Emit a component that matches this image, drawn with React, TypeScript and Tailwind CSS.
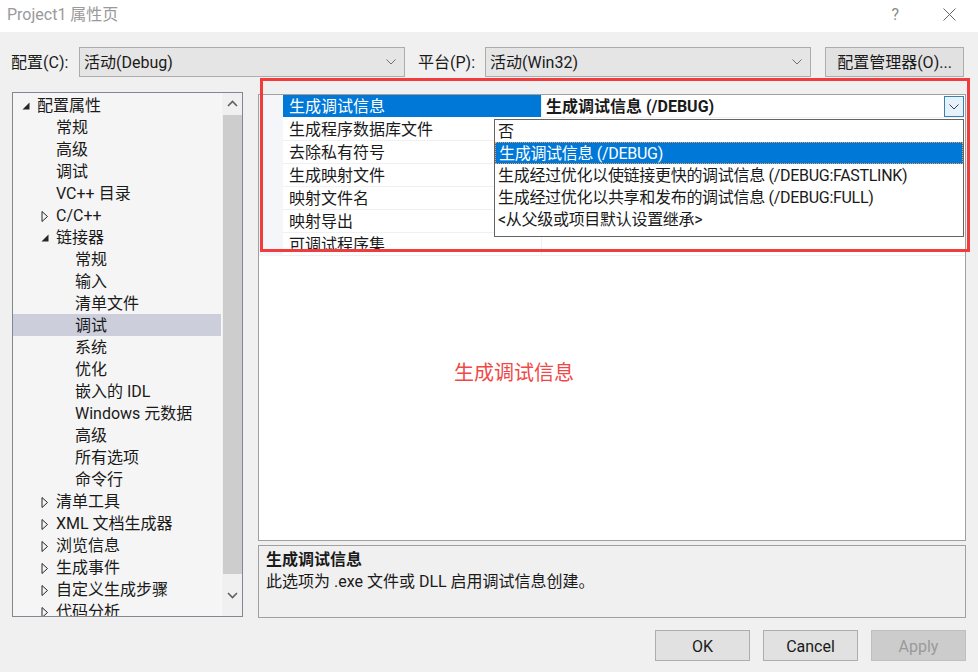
import React from "react";

type Node = { lvl: number; exp?: "down" | "right"; text: string; sel?: boolean };

const tree: Node[] = [
  { lvl: 0, exp: "down", text: "配置属性" },
  { lvl: 1, text: "常规" },
  { lvl: 1, text: "高级" },
  { lvl: 1, text: "调试" },
  { lvl: 1, text: "VC++ 目录" },
  { lvl: 1, exp: "right", text: "C/C++" },
  { lvl: 1, exp: "down", text: "链接器" },
  { lvl: 2, text: "常规" },
  { lvl: 2, text: "输入" },
  { lvl: 2, text: "清单文件" },
  { lvl: 2, text: "调试", sel: true },
  { lvl: 2, text: "系统" },
  { lvl: 2, text: "优化" },
  { lvl: 2, text: "嵌入的 IDL" },
  { lvl: 2, text: "Windows 元数据" },
  { lvl: 2, text: "高级" },
  { lvl: 2, text: "所有选项" },
  { lvl: 2, text: "命令行" },
  { lvl: 1, exp: "right", text: "清单工具" },
  { lvl: 1, exp: "right", text: "XML 文档生成器" },
  { lvl: 1, exp: "right", text: "浏览信息" },
  { lvl: 1, exp: "right", text: "生成事件" },
  { lvl: 1, exp: "right", text: "自定义生成步骤" },
  { lvl: 1, exp: "right", text: "代码分析" },
];

const props = [
  "生成调试信息",
  "生成程序数据库文件",
  "去除私有符号",
  "生成映射文件",
  "映射文件名",
  "映射导出",
  "可调试程序集",
];

const options = [
  "否",
  "生成调试信息 (/DEBUG)",
  "生成经过优化以使链接更快的调试信息 (/DEBUG:FASTLINK)",
  "生成经过优化以共享和发布的调试信息 (/DEBUG:FULL)",
  "<从父级或项目默认设置继承>",
];

function ChevronDown({ color = "#606060" }: { color?: string }) {
  return (
    <svg width="10" height="6" viewBox="0 0 10 6">
      <polyline points="0.5,0.5 5,5 9.5,0.5" fill="none" stroke={color} strokeWidth="1" />
    </svg>
  );
}

function Indent({ pl }: { pl: number }) {
  if (pl === 0) return <div className="w-[9px] shrink-0" />;
  if (pl === 1) return <div className="w-[28px] shrink-0" />;
  return <div className="w-[47px] shrink-0" />;
}

function Expander({ exp }: { exp?: "down" | "right" }) {
  if (exp === "down")
    return (
      <div className="w-[15px] shrink-0 flex items-center">
        <svg width="8" height="8" viewBox="0 0 8 8">
          <polygon points="7.5,0.5 7.5,7.5 0.5,7.5" fill="#262626" />
        </svg>
      </div>
    );
  if (exp === "right")
    return (
      <div className="w-[15px] shrink-0 flex items-center">
        <svg width="8" height="11" viewBox="0 0 8 11">
          <polygon points="1,0.5 6.5,5.5 1,10.5" fill="none" stroke="#262626" strokeWidth="1" />
        </svg>
      </div>
    );
  return <div className="w-[15px] shrink-0" />;
}

function Select({ value }: { value: string }) {
  return (
    <div className="w-[326px] h-[30px] bg-[#e5e5e5] border border-[#acacac] flex items-center justify-between pl-[4px] pr-[8px]">
      <span className="pt-[2px]">{value}</span>
      <ChevronDown color="#707070" />
    </div>
  );
}

export default function App() {
  return (
    <div className="relative w-[978px] h-[672px] overflow-hidden bg-[#f0f0f0] text-[16px] text-[#1a1a1a] font-['Roboto','Noto_Sans_CJK_SC',sans-serif] leading-[22px]">
      {/* Title bar */}
      <div className="h-[32px] bg-white flex items-center pl-[7px] pr-[22px] pb-[3px]">
        <span className="text-[#9a9a9a] text-[16px]">Project1 属性页</span>
        <div className="ml-auto flex items-center gap-[44px]">
          <span className="text-[#8a8a8a] text-[16px]">?</span>
          <svg width="13" height="13" viewBox="0 0 13 13">
            <line x1="0.5" y1="0.5" x2="12.5" y2="12.5" stroke="#666" strokeWidth="1" />
            <line x1="12.5" y1="0.5" x2="0.5" y2="12.5" stroke="#666" strokeWidth="1" />
          </svg>
        </div>
      </div>

      {/* Top row */}
      <div className="mt-[15px] h-[30px] flex items-center pl-[11px]">
        <span className="w-[68px] pt-[2px]">配置(C):</span>
        <Select value="活动(Debug)" />
        <span className="ml-[13px] w-[67px] pt-[2px]">平台(P):</span>
        <Select value="活动(Win32)" />
        <div className="ml-[14px] w-[139px] h-[30px] pt-[2px] bg-[#e1e1e1] border border-[#adadad] flex items-center justify-center">
          配置管理器(O)...
        </div>
      </div>

      {/* Main */}
      <div className="mt-[15px] flex pl-[12px]">
        {/* Tree */}
        <div className="w-[231px] h-[525px] border border-[#828790] bg-[#f5f5f5] flex">
          <div className="w-[208px] overflow-hidden">
            {tree.map((n, i) => (
              <div
                key={i}
                className={`h-[22px] pt-[2px] flex items-center whitespace-nowrap ${n.sel ? "bg-[#cccedb]" : ""} ${i === 0 ? "mt-[1px]" : ""}`}
              >
                <Indent pl={n.lvl} />
                <Expander exp={n.exp} />
                <span>{n.text}</span>
              </div>
            ))}
          </div>
          <div className="w-[21px] bg-[#f0f0f0] border-l border-[#f8f8f8] flex flex-col items-center">
            <div className="h-[21px] w-full flex items-center justify-center">
              <svg width="11" height="7" viewBox="0 0 11 7">
                <polyline points="1,6 5.5,1.5 10,6" fill="none" stroke="#606060" strokeWidth="1.6" />
              </svg>
            </div>
            <div className="mt-[1px] h-[459px] w-[19px] bg-[#cdcdcd]" />
            <div className="flex-1 w-full flex items-center justify-center">
              <svg width="11" height="7" viewBox="0 0 11 7">
                <polyline points="1,1 5.5,5.5 10,1" fill="none" stroke="#606060" strokeWidth="1.6" />
              </svg>
            </div>
          </div>
        </div>

        {/* Right column */}
        <div className="ml-[15px] w-[708px] pt-[2px] flex flex-col">
          <div className="h-[447px] border border-[#a0a0a0] bg-white flex flex-col">
            {props.map((p, i) => (
              <div key={i} className="h-[23px] flex">
                <div className="w-[24px] bg-[#f5f6f9]" />
                <div
                  className={`w-[258px] pl-[6px] whitespace-nowrap leading-[24px] ${
                    i === 0 ? "bg-[#0078d7] text-white h-[22px]" : "border-b border-[#f0f0f0]"
                  }`}
                >
                  {p}
                </div>
                <div className="flex-1 border-l border-[#f0f0f0] border-b border-b-[#f0f0f0] flex items-start">
                  {i === 0 && (
                    <>
                      <span className="pl-[4px] font-bold leading-[24px]">生成调试信息 (/DEBUG)</span>
                      <div className="ml-auto mr-[1px] mt-[1px] w-[20px] h-[21px] border border-[#3c7fb1] bg-[#e5f1fb] flex items-center justify-center">
                        <ChevronDown color="#404040" />
                      </div>
                    </>
                  )}
                </div>
              </div>
            ))}
          </div>
          <div className="mt-[4px] h-[73px] border border-[#a0a0a0] bg-[#f0f0f0] px-[7px] pt-[3px]">
            <div className="font-bold">生成调试信息</div>
            <div>此选项为 .exe 文件或 DLL 启用调试信息创建。</div>
          </div>
        </div>
      </div>

      {/* Buttons */}
      <div className="mt-[12px] flex justify-end gap-[13px] pr-[12px]">
        <div className="w-[95px] h-[31px] pt-[2px] bg-[#e1e1e1] border border-[#adadad] flex items-center justify-center">OK</div>
        <div className="w-[95px] h-[31px] pt-[2px] bg-[#e1e1e1] border border-[#adadad] flex items-center justify-center">Cancel</div>
        <div className="w-[95px] h-[31px] pt-[2px] bg-[#cccccc] border border-[#bfbfbf] text-[#9a9a9a] flex items-center justify-center">Apply</div>
      </div>

      {/* Dropdown list overlay */}
      <div className="absolute left-[494px] top-[119px] w-[470px] h-[118px] bg-white border border-[#646464] tracking-[-0.3px]">
        {options.map((o, i) => (
          <div
            key={i}
            className={`h-[22px] pl-[3px] whitespace-nowrap ${
              i === 1
                ? "bg-[#0078d7] text-white border border-dotted border-[#f0a050] pl-[2px] leading-[22px]"
                : "leading-[24px]"
            }`}
          >
            {o}
          </div>
        ))}
      </div>

      {/* Red annotation rectangle */}
      <div className="absolute left-[260px] top-[78px] w-[710px] h-[174px] border-[3px] border-[#f03c3c] pointer-events-none" />

      {/* Red annotation label */}
      <div className="absolute left-[454px] top-[359px] text-[20px] leading-[28px] text-[#f04848]">生成调试信息</div>
    </div>
  );
}
